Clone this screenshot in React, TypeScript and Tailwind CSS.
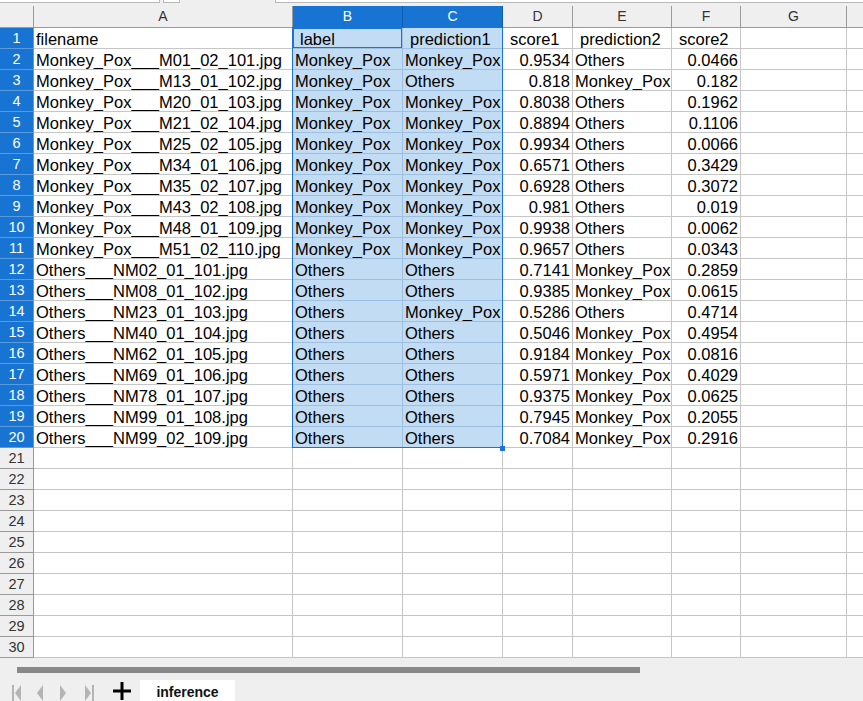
import React from "react";

const rows: string[][] = [
  ["Monkey_Pox___M01_02_101.jpg", "Monkey_Pox", "Monkey_Pox", "0.9534", "Others", "0.0466"],
  ["Monkey_Pox___M13_01_102.jpg", "Monkey_Pox", "Others", "0.818", "Monkey_Pox", "0.182"],
  ["Monkey_Pox___M20_01_103.jpg", "Monkey_Pox", "Monkey_Pox", "0.8038", "Others", "0.1962"],
  ["Monkey_Pox___M21_02_104.jpg", "Monkey_Pox", "Monkey_Pox", "0.8894", "Others", "0.1106"],
  ["Monkey_Pox___M25_02_105.jpg", "Monkey_Pox", "Monkey_Pox", "0.9934", "Others", "0.0066"],
  ["Monkey_Pox___M34_01_106.jpg", "Monkey_Pox", "Monkey_Pox", "0.6571", "Others", "0.3429"],
  ["Monkey_Pox___M35_02_107.jpg", "Monkey_Pox", "Monkey_Pox", "0.6928", "Others", "0.3072"],
  ["Monkey_Pox___M43_02_108.jpg", "Monkey_Pox", "Monkey_Pox", "0.981", "Others", "0.019"],
  ["Monkey_Pox___M48_01_109.jpg", "Monkey_Pox", "Monkey_Pox", "0.9938", "Others", "0.0062"],
  ["Monkey_Pox___M51_02_110.jpg", "Monkey_Pox", "Monkey_Pox", "0.9657", "Others", "0.0343"],
  ["Others___NM02_01_101.jpg", "Others", "Others", "0.7141", "Monkey_Pox", "0.2859"],
  ["Others___NM08_01_102.jpg", "Others", "Others", "0.9385", "Monkey_Pox", "0.0615"],
  ["Others___NM23_01_103.jpg", "Others", "Monkey_Pox", "0.5286", "Others", "0.4714"],
  ["Others___NM40_01_104.jpg", "Others", "Others", "0.5046", "Monkey_Pox", "0.4954"],
  ["Others___NM62_01_105.jpg", "Others", "Others", "0.9184", "Monkey_Pox", "0.0816"],
  ["Others___NM69_01_106.jpg", "Others", "Others", "0.5971", "Monkey_Pox", "0.4029"],
  ["Others___NM78_01_107.jpg", "Others", "Others", "0.9375", "Monkey_Pox", "0.0625"],
  ["Others___NM99_01_108.jpg", "Others", "Others", "0.7945", "Monkey_Pox", "0.2055"],
  ["Others___NM99_02_109.jpg", "Others", "Others", "0.7084", "Monkey_Pox", "0.2916"],
];

const header = ["filename", "label", "prediction1", "score1", "prediction2", "score2"];

const widths = ["w-[259px]", "w-[110px]", "w-[100px]", "w-[70px]", "w-[99px]", "w-[69px]", "w-[106px]"];
const letters = ["A", "B", "C", "D", "E", "F", "G"];

function Cell({ col, row, text }: { col: number; row: number; text: string }) {
  const selected = (col === 1 || col === 2) && row >= 1 && row <= 20;
  const numeric = (col === 3 || col === 5) && row >= 2;
  const isHeader = row === 1 && col > 0;
  return (
    <div
      className={`${widths[col]} shrink-0 h-[21px] border-r border-b overflow-hidden whitespace-nowrap leading-[22px] ${
        selected ? "bg-[#c2dcf3] border-[#9dc0e2]" : "bg-white border-[#c6c6c6]"
      } ${numeric ? "text-right pr-[2px]" : isHeader ? "pl-[7px]" : "pl-[2px]"}`}
    >
      {text}
    </div>
  );
}

function NavIcon({ kind }: { kind: "first" | "prev" | "next" | "last" }) {
  const c = "#b4b4b4";
  return (
    <svg width="12" height="16" viewBox="0 0 12 16">
      {kind === "first" && (
        <>
          <rect x="1" y="0" width="2" height="16" fill={c} />
          <polygon points="10,0 4,8 10,16" fill={c} />
        </>
      )}
      {kind === "prev" && <polygon points="9,0 3,8 9,16" fill={c} />}
      {kind === "next" && <polygon points="3,0 9,8 3,16" fill={c} />}
      {kind === "last" && (
        <>
          <polygon points="2,0 8,8 2,16" fill={c} />
          <rect x="9" y="0" width="2" height="16" fill={c} />
        </>
      )}
    </svg>
  );
}

export default function App() {
  const all: string[][] = [header, ...rows];
  return (
    <div
      className="w-[863px] h-[701px] overflow-hidden bg-[#efefef] text-black flex flex-col"
      style={{ fontFamily: "'Liberation Sans', Arial, sans-serif" }}
    >
      {/* formula bar remnant */}
      <div className="h-[6px] flex items-start shrink-0">
        <div className="w-[160px] h-[3px] bg-white border-b border-r border-[#b8b8b8]" />
        <div className="ml-[3px] w-[17px] h-[3px] bg-white border-b border-x border-[#b8b8b8]" />
        <div className="ml-[95px] flex-1 h-[3px] bg-white border-b border-l border-[#b8b8b8]" />
      </div>

      {/* column headers */}
      <div className="flex h-[22px] shrink-0 text-[14px] text-[#333]">
        <div className="w-[34px] shrink-0 h-[22px] border-r border-b border-[#9a9a9a] bg-[#efefef]" />
        {letters.map((l, i) => {
          const sel = i === 1 || i === 2;
          return (
            <div
              key={l}
              className={`${widths[i]} shrink-0 h-[22px] border-r border-b flex items-center justify-center ${
                sel ? "bg-[#1874d3] text-white border-[#0c5cad]" : "bg-[#efefef] border-[#9a9a9a]"
              }`}
            >
              {l}
            </div>
          );
        })}
        <div className="flex-1 h-[22px] border-b border-[#9a9a9a] bg-[#efefef]" />
      </div>

      {/* grid body */}
      <div className="relative flex flex-col shrink-0 text-[16.5px]">
        {Array.from({ length: 30 }, (_, r) => {
          const rowNum = r + 1;
          const data = all[r];
          const rowSel = rowNum <= 20;
          return (
            <div key={rowNum} className="flex h-[21px]">
              <div
                className={`w-[34px] shrink-0 h-[21px] border-r border-b flex items-center justify-center pt-[1px] text-[14.5px] ${
                  rowSel ? "bg-[#1874d3] text-white border-[#5b9ce0]" : "bg-[#efefef] text-[#333] border-[#9a9a9a]"
                }`}
              >
                {rowNum}
              </div>
              {letters.map((_, c) => (
                <Cell key={c} col={c} row={rowNum} text={data && c < 6 ? data[c] : ""} />
              ))}
              <div className="flex-1 h-[21px] border-b border-[#c6c6c6] bg-white" />
            </div>
          );
        })}
        {/* selection outline */}
        <div className="absolute left-[292px] top-[-1px] w-[211px] h-[421px] border border-[#1a73d9] pointer-events-none" />
        {/* active cell */}
        <div className="absolute left-[293px] top-0 w-[109px] h-[20px] border border-[#1a73d9] pointer-events-none" />
        {/* fill handle */}
        <div className="absolute left-[500px] top-[418px] w-[5px] h-[5px] bg-[#1a73d9]" />
      </div>

      {/* bottom area */}
      <div className="flex-1 bg-[#efefef] flex flex-col">
        <div className="mt-[9px] ml-[17px] w-[623px] h-[6px] bg-[#888888]" />
        <div className="mt-[7px] flex items-start h-[24px]">
          <div className="ml-[11px] mt-[5px]">
            <NavIcon kind="first" />
          </div>
          <div className="ml-[11px] mt-[5px]">
            <NavIcon kind="prev" />
          </div>
          <div className="ml-[11px] mt-[5px]">
            <NavIcon kind="next" />
          </div>
          <div className="ml-[14px] mt-[5px]">
            <NavIcon kind="last" />
          </div>
          <div className="ml-[17px] mt-[1px]">
            <svg width="20" height="20" viewBox="0 0 20 20">
              <rect x="1" y="8.5" width="18" height="3" fill="#000" />
              <rect x="8.5" y="1" width="3" height="18" fill="#000" />
            </svg>
          </div>
          <div className="ml-[8px] w-[95px] h-[24px] bg-white flex items-center justify-center text-[14px] font-bold text-[#111]">
            inference
          </div>
        </div>
      </div>
    </div>
  );
}
